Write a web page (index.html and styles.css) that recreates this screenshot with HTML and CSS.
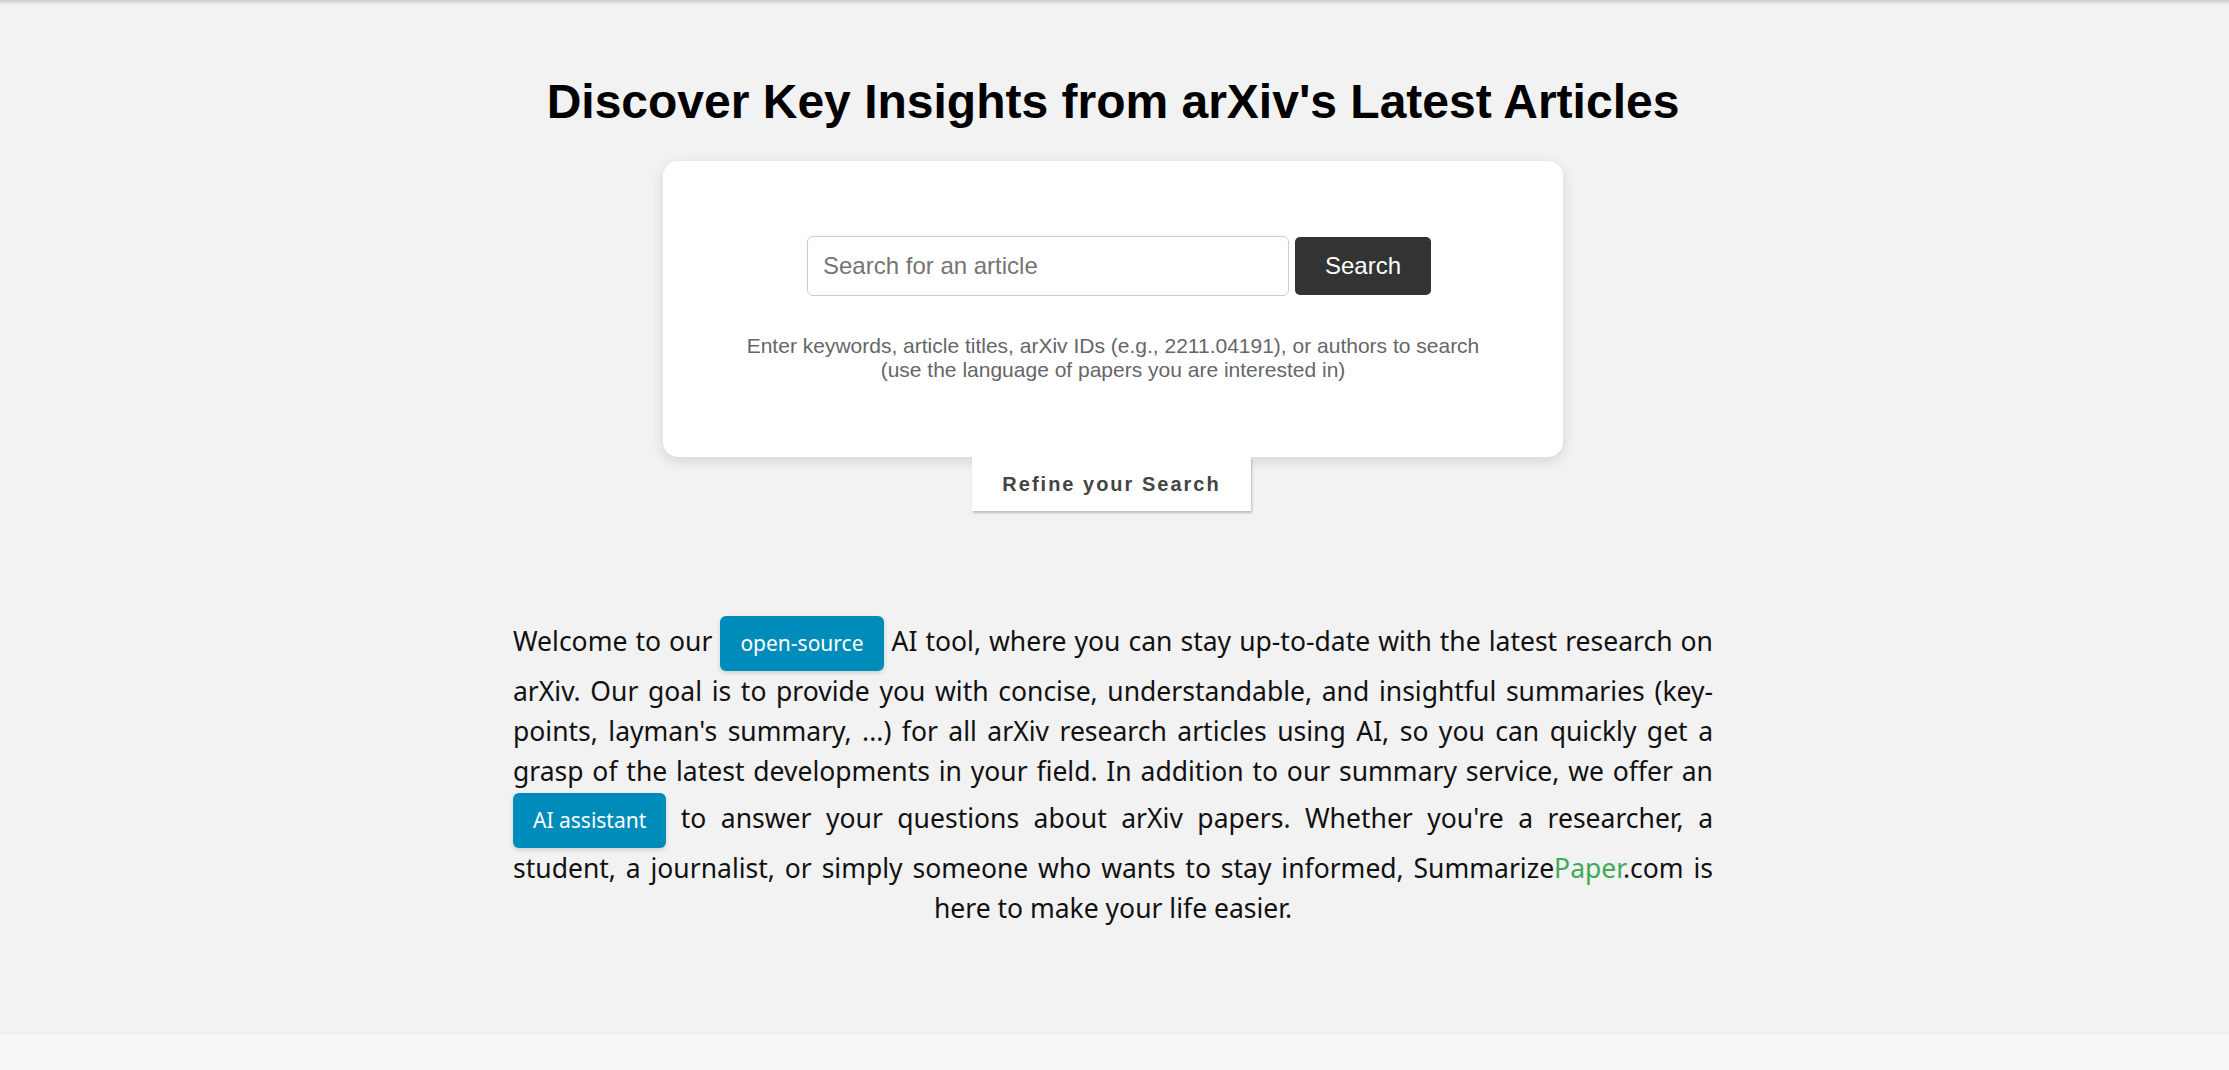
FILE: index.html
```html
<!DOCTYPE html>
<html lang="en">
<head>
<meta charset="utf-8">
<title>SummarizePaper</title>
<link rel="stylesheet" href="styles.css">
</head>
<body>
<div class="top-shadow"></div>
<main class="main">
  <h1 class="title">Discover Key Insights from arXiv's Latest Articles</h1>
  <section class="card">
    <form class="search-row">
      <input class="search-input" type="text" placeholder="Search for an article">
      <button class="search-btn" type="button">Search</button>
    </form>
    <p class="hint">Enter keywords, article titles, arXiv IDs (e.g., 2211.04191), or authors to search<br>(use the language of papers you are interested in)</p>
  </section>
  <div class="refine">Refine your Search</div>
  <p class="intro">Welcome to our <a class="pill" href="#">open-source</a> AI tool, where you can stay up-to-date with the latest research on arXiv. Our goal is to provide you with concise, understandable, and insightful summaries (key-points, layman's summary, ...) for all arXiv research articles using AI, so you can quickly get a grasp of the latest developments in your field. In addition to our summary service, we offer an <a class="pill" href="#">AI assistant</a> to answer your questions about arXiv papers. Whether you're a researcher, a student, a journalist, or simply someone who wants to stay informed, Summarize<span class="green">Paper</span>.com is here to make your life easier.</p>
</main>
<footer class="footer"></footer>
</body>
</html>
```
FILE: styles.css
```css
html, body {
  margin: 0;
  padding: 0;
}
body {
  background: #f2f2f2;
  font-family: "Liberation Sans", Arial, sans-serif;
  color: #000;
  height: 1070px;
  overflow: hidden;
}
.top-shadow {
  height: 5px;
  background: linear-gradient(to bottom, rgba(0,0,0,0.16), rgba(0,0,0,0));
}
.main {
  height: 1030px;
  box-sizing: border-box;
  padding-right: 3px;
  display: flex;
  flex-direction: column;
  align-items: center;
}
.title {
  margin: 70px 0 0;
  font-size: 48px;
  line-height: 54px;
  font-weight: bold;
  text-align: center;
}
.card {
  margin-top: 32px;
  width: 900px;
  box-sizing: border-box;
  background: #fff;
  border-radius: 15px;
  box-shadow: 0 4px 14px rgba(0,0,0,0.12);
  padding: 75px 0 75px;
  display: flex;
  flex-direction: column;
  align-items: center;
}
.search-row {
  margin: 0;
  display: flex;
  align-items: center;
  gap: 6px;
  padding-left: 12px;
}
.search-input {
  width: 482px;
  height: 60px;
  box-sizing: border-box;
  border: 1px solid #ccc;
  border-radius: 6px;
  padding: 0 15px;
  font-family: "Liberation Sans", Arial, sans-serif;
  font-size: 24px;
  color: #333;
  background: #fff;
  outline: none;
}
.search-input::placeholder {
  color: #757575;
}
.search-btn {
  width: 136px;
  height: 58px;
  border: none;
  border-radius: 5px;
  background: #333;
  color: #fff;
  font-family: "Liberation Sans", Arial, sans-serif;
  font-size: 24px;
  padding: 0;
}
.hint {
  margin: 38px 0 0;
  font-size: 21px;
  line-height: 24px;
  color: #666;
  text-align: center;
}
.refine {
  width: 279px;
  box-sizing: border-box;
  margin-right: 3px;
  padding: 15px 0;
  background: #fff;
  box-shadow: 1px 2px 2px rgba(0,0,0,0.22);
  font-size: 20px;
  line-height: 24px;
  font-weight: bold;
  letter-spacing: 2px;
  color: #444;
  text-align: center;
}
.intro {
  margin: 103px 0 0;
  width: 1200px;
  font-family: "Noto Sans", "Open Sans", sans-serif;
  font-size: 26.5px;
  line-height: 40px;
  color: #111;
  text-align: justify;
  text-align-last: center;
}
.pill {
  display: inline-block;
  margin-top: 2px;
  background: #008cba;
  color: #fff;
  text-decoration: none;
  font-size: 21px;
  line-height: 31px;
  padding: 12px 20px;
  border-radius: 6px;
  box-shadow: 0 2px 4px rgba(0,0,0,0.15);
  text-align-last: auto;
}
.green {
  color: #3fa958;
}
.footer {
  height: 35px;
  background: #f8f8f8;
}
```
